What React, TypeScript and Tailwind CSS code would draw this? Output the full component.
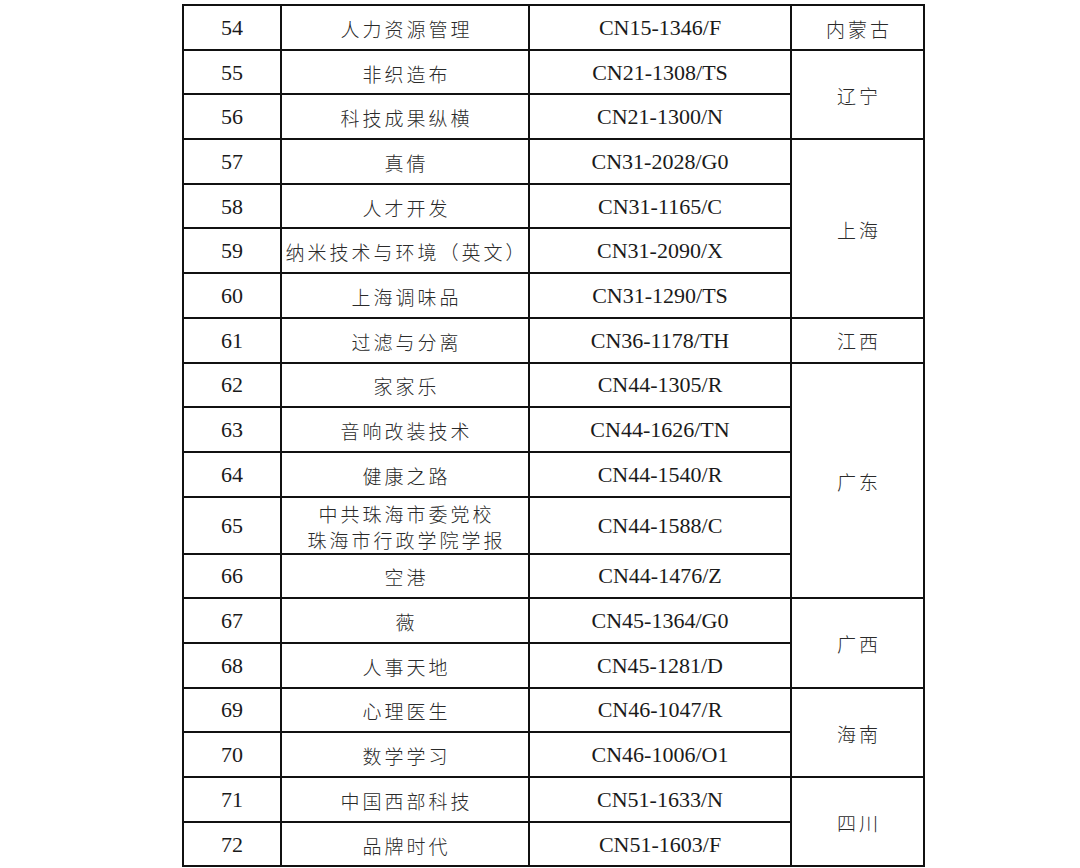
const serif = 'font-["Liberation_Serif","Times_New_Roman",serif]'
const cjk = 'font-["Noto_Sans_CJK_SC","Noto_Sans",sans-serif] font-light tracking-[3px] pl-[3px] text-[#2a2a2a]'

type Row = { no: number; name: string[]; code: string }

const groups: { province: string; rows: Row[] }[] = [
  { province: '内蒙古', rows: [{ no: 54, name: ['人力资源管理'], code: 'CN15-1346/F' }] },
  {
    province: '辽宁',
    rows: [
      { no: 55, name: ['非织造布'], code: 'CN21-1308/TS' },
      { no: 56, name: ['科技成果纵横'], code: 'CN21-1300/N' },
    ],
  },
  {
    province: '上海',
    rows: [
      { no: 57, name: ['真倩'], code: 'CN31-2028/G0' },
      { no: 58, name: ['人才开发'], code: 'CN31-1165/C' },
      { no: 59, name: ['纳米技术与环境（英文）'], code: 'CN31-2090/X' },
      { no: 60, name: ['上海调味品'], code: 'CN31-1290/TS' },
    ],
  },
  { province: '江西', rows: [{ no: 61, name: ['过滤与分离'], code: 'CN36-1178/TH' }] },
  {
    province: '广东',
    rows: [
      { no: 62, name: ['家家乐'], code: 'CN44-1305/R' },
      { no: 63, name: ['音响改装技术'], code: 'CN44-1626/TN' },
      { no: 64, name: ['健康之路'], code: 'CN44-1540/R' },
      { no: 65, name: ['中共珠海市委党校', '珠海市行政学院学报'], code: 'CN44-1588/C' },
      { no: 66, name: ['空港'], code: 'CN44-1476/Z' },
    ],
  },
  {
    province: '广西',
    rows: [
      { no: 67, name: ['薇'], code: 'CN45-1364/G0' },
      { no: 68, name: ['人事天地'], code: 'CN45-1281/D' },
    ],
  },
  {
    province: '海南',
    rows: [
      { no: 69, name: ['心理医生'], code: 'CN46-1047/R' },
      { no: 70, name: ['数学学习'], code: 'CN46-1006/O1' },
    ],
  },
  {
    province: '四川',
    rows: [
      { no: 71, name: ['中国西部科技'], code: 'CN51-1633/N' },
      { no: 72, name: ['品牌时代'], code: 'CN51-1603/F' },
    ],
  },
]

const cell = 'border-2 border-[#111] text-center align-middle p-0'

function App() {
  return (
    <div className="w-[1080px] h-[868px] bg-white overflow-hidden">
      <table className="border-collapse ml-[182px] mt-[4px] table-fixed w-[741px]">
        <colgroup>
          <col className="w-[98px]" />
          <col className="w-[248px]" />
          <col className="w-[262px]" />
          <col className="w-[133px]" />
        </colgroup>
        <tbody>
          {groups.map((g) =>
            g.rows.map((r, i) => (
              <tr key={r.no} className={r.name.length > 1 ? 'h-[55.5px]' : 'h-[44.7px]'}>
                <td className={`${cell} ${serif} text-[22px] text-[#1a1a1a]`}>{r.no}</td>
                <td className={`${cell} ${cjk} text-[19px] leading-[26px] pt-[3px]`}>
                  {r.name.map((n) => (
                    <div key={n}>{n}</div>
                  ))}
                </td>
                <td className={`${cell} ${serif} text-[22px] text-[#1a1a1a]`}>{r.code}</td>
                {i === 0 && (
                  <td rowSpan={g.rows.length} className={`${cell} ${cjk} text-[19px] pt-[3px]`}>
                    {g.province}
                  </td>
                )}
              </tr>
            ))
          )}
        </tbody>
      </table>
    </div>
  )
}

export default App
